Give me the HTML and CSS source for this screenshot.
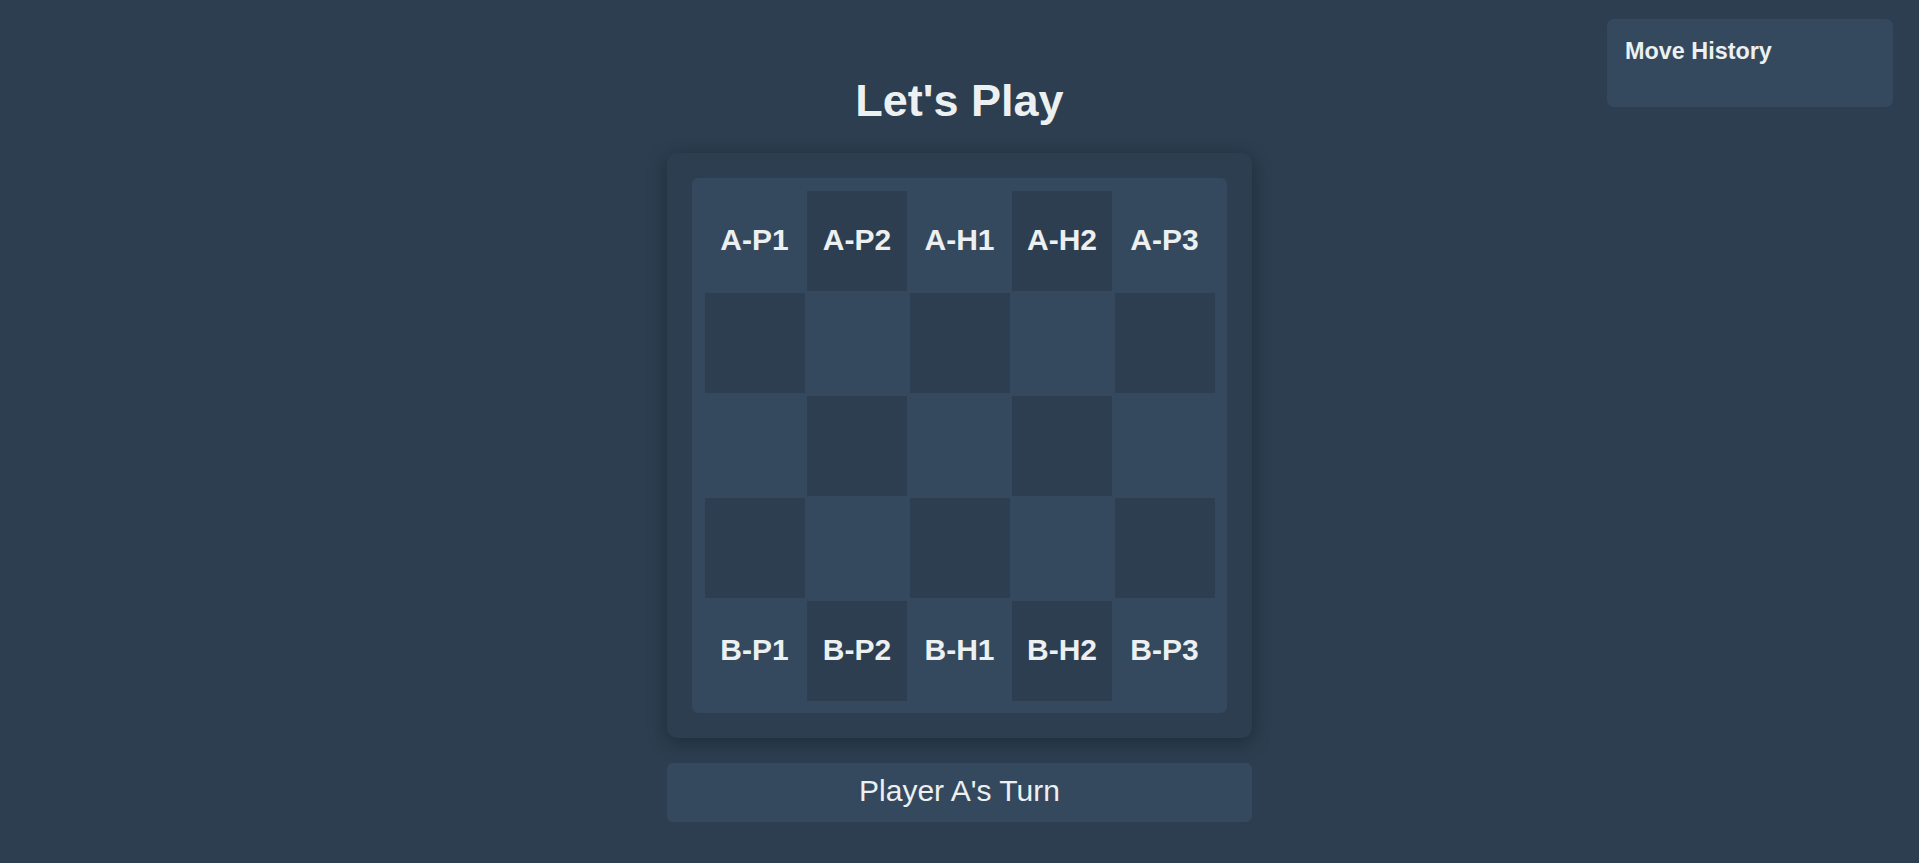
FILE: index.html
```html
<!DOCTYPE html>
<html lang="en">
<head>
<meta charset="utf-8">
<title>Let's Play</title>
<link rel="stylesheet" href="styles.css">
</head>
<body>
<div class="history">
  <h3 class="history-title">Move History</h3>
</div>
<main class="game">
  <h1 class="title">Let's Play</h1>
  <div class="board-wrap">
    <div class="board">
      <div class="cell light">A-P1</div>
      <div class="cell dark">A-P2</div>
      <div class="cell light">A-H1</div>
      <div class="cell dark">A-H2</div>
      <div class="cell light">A-P3</div>

      <div class="cell dark"></div>
      <div class="cell light"></div>
      <div class="cell dark"></div>
      <div class="cell light"></div>
      <div class="cell dark"></div>

      <div class="cell light"></div>
      <div class="cell dark"></div>
      <div class="cell light"></div>
      <div class="cell dark"></div>
      <div class="cell light"></div>

      <div class="cell dark"></div>
      <div class="cell light"></div>
      <div class="cell dark"></div>
      <div class="cell light"></div>
      <div class="cell dark"></div>

      <div class="cell light">B-P1</div>
      <div class="cell dark">B-P2</div>
      <div class="cell light">B-H1</div>
      <div class="cell dark">B-H2</div>
      <div class="cell light">B-P3</div>
    </div>
  </div>
  <div class="status">Player A's Turn</div>
</main>
</body>
</html>
```

FILE: styles.css
```css
* { box-sizing: border-box; }

html, body {
  margin: 0;
  padding: 0;
  background: #2c3e50;
  color: #ecf0f1;
  font-family: "Liberation Sans", Arial, sans-serif;
}

.game {
  display: flex;
  flex-direction: column;
  align-items: center;
  padding-top: 76px;
}

.title {
  margin: 0 0 27px;
  font-size: 45px;
  line-height: 50px;
  font-weight: bold;
}

.board-wrap {
  width: 585px;
  padding: 25px;
  background: #2c3e50;
  border-radius: 10px;
  box-shadow: 0 4px 20px rgba(0, 0, 0, 0.3);
}

.board {
  display: grid;
  grid-template-columns: repeat(5, 100px);
  grid-auto-rows: 100px;
  gap: 2.5px;
  padding: 12.5px;
  background: #34495e;
  border-radius: 6px;
}

.cell {
  display: flex;
  align-items: center;
  justify-content: center;
  padding-bottom: 2px;
  font-size: 30px;
  font-weight: bold;
}

.cell.light { background: #34495e; }
.cell.dark { background: #2c3e50; }

.status {
  margin-top: 25px;
  width: 585px;
  height: 59px;
  padding: 10px 0 14px;
  background: #34495e;
  border-radius: 6px;
  text-align: center;
  font-size: 30px;
  line-height: 35px;
}

.history {
  position: absolute;
  top: 19px;
  right: 26px;
  width: 286px;
  height: 88px;
  padding: 19px 18px;
  background: #34495e;
  border-radius: 7px;
}

.history-title {
  margin: 0;
  font-size: 23.4px;
  font-weight: bold;
}
```
